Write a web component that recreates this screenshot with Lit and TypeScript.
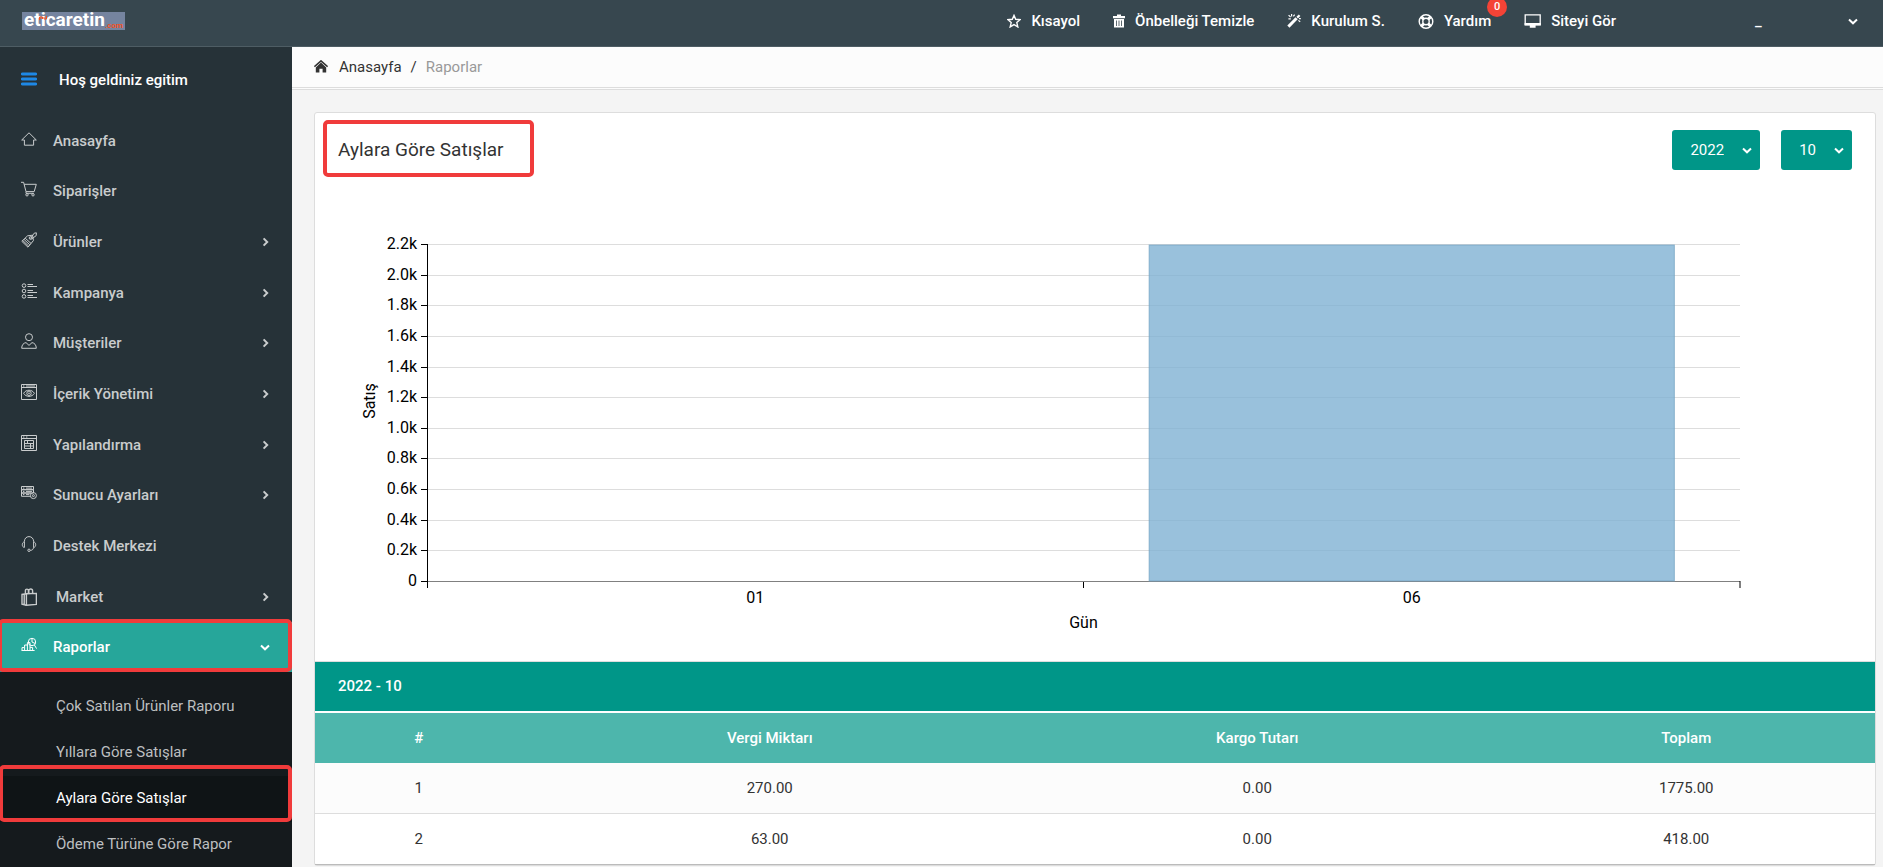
import { LitElement, html, svg, css } from "lit";
import { customElement, property, state } from "lit/decorators.js";
import { classMap } from "lit/directives/class-map.js";

const ICONS: Record<string, unknown> = {
  home: svg`<path d="M.7 9 8 1.8 15.3 9H12.6V14.2H3.4V9Z"/>`,
  cart: svg`<path d="M0 1.3H2.6L5 10.6H13.2L15.3 3.3H3.2"/><circle cx="6" cy="13.8" r="1.2"/><circle cx="12" cy="13.8" r="1.2"/><path d="M5 10.6V12.3H12.8"/>`,
  tag: svg`<path d="M.8 9.3 6.6 3.8 11.6 3.2 12.4 8.6 7 15.2ZM1.8 8.6 7.6 14M3 7.4 8.8 12.8M4.2 6.2 10 11.4"/><path d="M9.4 6.6 13.2 1.2 15.4.8 15.2 3.6 10.6 7"/><circle cx="9.6" cy="6" r="1.4"/>`,
  list: svg`<circle cx="3" cy="2.6" r="1.8"/><circle cx="3" cy="8" r="1.8"/><circle cx="3" cy="13.4" r="1.8"/><path d="M6.5 1.5H12M6.5 3.5H16M6.5 7.5H12M6.5 9.5H16M6.5 12.5H12M6.5 14.5H16"/>`,
  user: svg`<circle cx="8" cy="4.2" r="3.5"/><path d="M.7 15.3C.7 11.8 2.6 10 5 9.6L8 12.4 11 9.6C13.4 10 15.3 11.8 15.3 15.3Z"/>`,
  view: svg`<path d="M.5.5H15.5V15.5H.5ZM.5 3.5H15.5M2 2H3.4M5 2H14M2.6 9.3C5 5.2 11 5.2 13.4 9.3C11 13.4 5 13.4 2.6 9.3Z"/><circle cx="8" cy="9.3" r="2.2"/><circle cx="8" cy="9.3" r=".5"/>`,
  settings: svg`<path d="M.5.5H15.5V15.5H.5ZM.5 3.5H15.5M2 2H3.4M5 2H6.4M3.5 5.5H12.5V13.5H3.5ZM3.5 8.5H12.5M3.5 11H12.5M6.5 5.5V8.5M9.5 8.5V13.5"/>`,
  server: svg`<path d="M.5 1.5H12.5V4.7H.5ZM.5 4.7H12.5V8H.5ZM9.5 11.3H.5V8H10M2 3.1H3.4M5 3.1H11M2 6.4H3.4M5 6.4H11M2 9.6H3.4M5 9.6H8.4"/><circle cx="12.4" cy="10.6" r="3"/><circle cx="12.4" cy="10.6" r="1"/>`,
  headset: svg`<path d="M3.4 6V5.4C3.4 2.6 5.4.6 8 .6C10.6.6 12.6 2.6 12.6 5.4V6M3.4 6C.6 6 .6 11.4 3.4 11.4ZM12.6 6C15.4 6 15.4 11.4 12.6 11.4ZM12.6 11.4C12.4 13.4 11 14.4 9.4 14.4"/><circle cx="8" cy="14.3" r="1.2"/>`,
  bag: svg`<path d="M5.4 5.8 15.4 5.4V16.4L5.4 17.2ZM5.4 5.8 1 6.4V16.2L5.4 17.2M3.2 6.2V16.6M4.4 5.6V2.8C4.4.6 7.4.6 7.4 2.8V5.6M7.8 5.4V2.8C7.8.4 11.6.4 11.6 2.8V5.4" stroke-width="1.4"/>`,
  report: svg`<path d="M.6 13.5H13.6M1 13.5V10.6H3.6V13.5M3.6 10.6V8H6.4V13.5M6.4 8V5.6H9V13.5M11.6 13.5V10.4H9"/><circle cx="11" cy="5" r="3.7"/><path d="M11 5V1.2M11 5 14.4 6.6M13.4 8 15.6 11.6"/>`,
  star: svg`<path d="M7 1.4 8.7 5.3 13 5.7 9.8 8.6 10.8 12.9 7 10.6 3.2 12.9 4.2 8.6 1 5.7 5.3 5.3Z" stroke-width="1.4"/>`,
  trash: svg`<path class="solid" fill-rule="evenodd" d="M4 .4H8V2H12V4.2H0V2H4ZM1 5H11V13.6H1ZM3 6.4V12H3.8V6.4ZM5.6 6.4V12H6.4V6.4ZM8.2 6.4V12H9V6.4Z"/>`,
  wand: svg`<path d="M1.4 12.6 9.6 4.2" stroke-width="3"/><path d="M10.2 3.6 12.6 1.2" stroke-width="2.2"/><path d="M4.6 0V2.6M1.6 1.2 3.6 3.2M7.6.6 6.4 2.4M1.4 4.8H3.8M11.4 6.4 13.2 7.8M12 4.6H13.8" stroke-width="1.2"/>`,
  ring: svg`<circle cx="8" cy="7.5" r="6.8" stroke-width="1.4"/><circle cx="8" cy="7.5" r="3.2" stroke-width="1.4"/><path d="M3.4 2.9 5.8 5.3M12.6 2.9 10.2 5.3M3.4 12.1 5.8 9.7M12.6 12.1 10.2 9.7" stroke-width="3"/>`,
  monitor: svg`<path d="M1.2.8H16.2V10.6H1.2Z" stroke-width="1.3"/><path class="solid" d="M.6 9H16.8V11.6H11.6V13.8H5.8V11.6H.6Z"/>`,
  house: svg`<path class="solid" d="M7 2.6 12.2 7.4V12.6H8.6V8.8H5.4V12.6H1.8V7.4Z"/><path d="M.4 6.6 7 .9 13.6 6.6" stroke-width="1.6"/>`,
  bars: svg`<path d="M1.4 2H14.6M1.4 7H14.6M1.4 12H14.6" stroke-width="3" stroke-linecap="round"/>`,
  right: svg`<path d="M1.6 1.4 5.2 5 1.6 8.6" stroke-width="2"/>`,
  down: svg`<path d="M1 1.5 5 5.3 9 1.5" stroke-width="2"/>`,
};

const icon = (name: string, w = 16, h = 16) => html`
  <svg class="icon" width=${w} height=${h} viewBox="0 0 ${w} ${h}" aria-hidden="true">${ICONS[name]}</svg>
`;

const iconStyles = css`
  .icon {
    display: block;
    flex: none;
    fill: none;
    stroke: currentColor;
    stroke-width: 1;
  }
  .solid {
    fill: currentColor;
    stroke: none;
  }
`;

@customElement("top-bar")
class TopBar extends LitElement {
  static styles = [
    iconStyles,
    css`
      :host {
        display: flex;
        box-sizing: border-box;
        height: 47px;
        padding: 0 25px 0 22px;
        background: #37474f;
        border-bottom: 1px solid #4e5d64;
        color: #fff;
        font-weight: 500;
        line-height: 20px;
      }
      a {
        color: inherit;
        text-decoration: none;
      }
      .logo {
        display: flex;
        position: relative;
        align-items: flex-end;
        align-self: flex-start;
        height: 18px;
        margin-top: 12px;
        padding: 0 2px;
        background: #75849f;
        font: 700 19px/20px Roboto, sans-serif;
      }
      .logo small {
        color: #f4511e;
        font: 700 8px/8px Roboto, sans-serif;
      }
      .spark {
        position: absolute;
        top: 4px;
        left: 17px;
        fill: none;
        stroke: #f4511e;
      }
      nav {
        display: flex;
        gap: 33px;
        margin-left: auto;
        padding-top: 11px;
      }
      nav a {
        display: flex;
        position: relative;
        gap: 10px;
        height: 20px;
        align-items: center;
      }
      .badge {
        position: absolute;
        top: -14px;
        right: -16px;
        width: 20px;
        height: 20px;
        border-radius: 10px;
        background: #f44336;
        font-size: 11px;
        text-align: center;
      }
      .account {
        display: flex;
        align-items: center;
        justify-content: space-between;
        width: 103px;
        height: 20px;
        margin: 11px 0 0 139px;
        padding: 0;
        border: 0;
        background: none;
        color: inherit;
        font: inherit;
      }
    `,
  ];

  render() {
    return html`
      <a class="logo" href="#">eticaretin<small>.com</small><svg class="spark" width="8" height="4" aria-hidden="true"><path d="M.5 4V1H3.5V3M2 1V3M5 1V3H7.5V0" /></svg></a>
      <nav>
        <a href="#">${icon("star", 14, 14)}Kısayol</a>
        <a href="#">${icon("trash", 12, 14)}Önbelleği Temizle</a>
        <a href="#">${icon("wand", 14, 14)}Kurulum S.</a>
        <a href="#">${icon("ring", 16, 15)}Yardım<span class="badge">0</span></a>
        <a href="#">${icon("monitor", 17, 14)}Siteyi Gör</a>
      </nav>
      <button class="account" aria-label="Hesap"><span>_</span>${icon("down", 10, 7)}</button>
    `;
  }
}

interface MenuItem {
  label: string;
  icon: string;
  sub?: boolean;
}

@customElement("side-menu")
class SideMenu extends LitElement {
  static styles = [
    iconStyles,
    css`
      :host {
        display: block;
        overflow-y: auto;
        scrollbar-width: none;
        background: #263238;
        color: #c9cccd;
        line-height: 20px;
      }
      a {
        color: inherit;
        text-decoration: none;
      }
      ul {
        margin: 0;
        padding: 0;
        list-style: none;
      }
      .welcome {
        display: flex;
        gap: 22px;
        align-items: center;
        padding: 23px 21px 25px;
        color: #fff;
        font-weight: 500;
      }
      .welcome .icon {
        margin-bottom: 2px;
        color: #1e88e5;
      }
      .item {
        display: flex;
        position: relative;
        box-sizing: border-box;
        gap: 16px;
        align-items: center;
        height: 51px;
        padding: 0 22px 0 21px;
        font-weight: 500;
      }
      li:nth-child(3n + 2) > .item {
        height: 50px;
      }
      .item > .icon:first-child {
        margin-bottom: 4px;
      }
      .item.wide {
        gap: 19px;
      }
      .item.wide > .icon:first-child {
        margin-bottom: 0;
      }
      .arrow {
        display: flex;
        justify-content: center;
        width: 10px;
        margin-left: auto;
      }
      .open {
        background: #26a69a;
        color: #fff;
      }
      .submenu {
        padding-top: 12px;
        background: #151a1d;
      }
      .submenu a {
        display: block;
        position: relative;
        padding: 12px 24px 14px 56px;
        color: #bdbfc0;
      }
      .submenu .active {
        background: #0f1416;
        color: #fff;
      }
      .marked::after {
        content: "";
        position: absolute;
        inset: -3px 0 0 -2px;
        border: 4px solid #f03b3b;
        border-radius: 5px;
      }
      .submenu .marked::after {
        inset: -11px 0 0 -1px;
      }
    `,
  ];

  private items: MenuItem[] = [
    { label: "Anasayfa", icon: "home" },
    { label: "Siparişler", icon: "cart" },
    { label: "Ürünler", icon: "tag", sub: true },
    { label: "Kampanya", icon: "list", sub: true },
    { label: "Müşteriler", icon: "user", sub: true },
    { label: "İçerik Yönetimi", icon: "view", sub: true },
    { label: "Yapılandırma", icon: "settings", sub: true },
    { label: "Sunucu Ayarları", icon: "server", sub: true },
    { label: "Destek Merkezi", icon: "headset" },
    { label: "Market", icon: "bag", sub: true },
  ];

  private reports = [
    "Çok Satılan Ürünler Raporu",
    "Yıllara Göre Satışlar",
    "Aylara Göre Satışlar",
    "Ödeme Türüne Göre Rapor",
  ];

  render() {
    return html`
      <div class="welcome">${icon("bars", 16, 14)}<span>Hoş geldiniz egitim</span></div>
      <ul>
        ${this.items.map(
          (item) => html`
            <li>
              <a class=${classMap({ item: true, wide: item.icon === "bag" })} href="#">
                ${icon(item.icon, 16, item.icon === "bag" ? 18 : 16)}
                <span>${item.label}</span>
                ${item.sub ? html`<span class="arrow">${icon("right", 7, 10)}</span>` : ""}
              </a>
            </li>
          `
        )}
        <li>
          <a class="item open marked" href="#">
            ${icon("report")}
            <span>Raporlar</span>
            <span class="arrow">${icon("down", 10, 7)}</span>
          </a>
          <ul class="submenu">
            ${this.reports.map(
              (label, i) => html`
                <li><a class=${classMap({ active: i === 2, marked: i === 2 })} href="#">${label}</a></li>
              `
            )}
          </ul>
        </li>
      </ul>
    `;
  }
}

@customElement("sales-chart")
class SalesChart extends LitElement {
  static styles = css`
    :host {
      display: block;
      padding: 74px 135px 80px 112px;
    }
    svg {
      display: block;
      width: 100%;
      overflow: visible;
      font-size: 16px;
      fill: #000;
    }
    .grid {
      stroke: #ddd;
    }
    .axis {
      stroke: #000;
    }
    .base {
      stroke: #808080;
    }
    .bar {
      fill: #80b1d3;
      fill-opacity: 0.8;
      stroke: #6f9fc0;
      stroke-opacity: 0.7;
    }
    .y {
      text-anchor: end;
    }
    .x {
      text-anchor: middle;
    }
  `;

  private height = 337;
  private ticks = ["2.2k", "2.0k", "1.8k", "1.6k", "1.4k", "1.2k", "1.0k", "0.8k", "0.6k", "0.4k", "0.2k", "0"];

  render() {
    const h = this.height;
    const at = (i: number) => Math.round((i * h) / (this.ticks.length - 1)) + 0.5;
    return html`
      <svg height=${h} role="img" aria-label="Aylara göre satış grafiği">
        ${this.ticks.map(
          (label, i) => svg`
            <line class=${i === this.ticks.length - 1 ? "base" : "grid"} x1="0" x2="100%" y1=${at(i)} y2=${at(i)} />
            <line class="axis" x1="-6" x2="0" y1=${at(i)} y2=${at(i)} />
            <text class="y" x="-10" y=${at(i) + 4}>${label}</text>
          `
        )}
        <rect class="bar" x="55%" y="1" width="40%" height=${h - 1} />
        <line class="axis" x1="0.5" x2="0.5" y1="0" y2=${h + 7} />
        <line class="axis" x1="50%" x2="50%" y1=${h + 1} y2=${h + 7} />
        <line class="axis" x1="100%" x2="100%" y1=${h} y2=${h + 7} />
        <text class="x" x="25%" y=${h + 22}>01</text>
        <text class="x" x="75%" y=${h + 22}>06</text>
        <text class="x" x="50%" y=${h + 47}>Gün</text>
        <text class="x" transform="translate(-52 157) rotate(-90)">Satış</text>
      </svg>
    `;
  }
}

@customElement("pick-list")
class PickList extends LitElement {
  static styles = [
    iconStyles,
    css`
      :host {
        display: block;
        position: relative;
        color: #fff;
      }
      select {
        display: block;
        height: 40px;
        padding: 0 36px 0 18px;
        border: 0;
        border-radius: 3px;
        appearance: none;
        background: #009688;
        color: inherit;
        font: inherit;
        field-sizing: content;
      }
      .icon {
        position: absolute;
        top: 17px;
        right: 8px;
        pointer-events: none;
      }
    `,
  ];

  @property() label = "";
  @property() value = "";
  @property({ attribute: false }) options: string[] = [];

  render() {
    return html`
      <select aria-label=${this.label}>
        ${this.options.map((o) => html`<option ?selected=${o === this.value}>${o}</option>`)}
      </select>
      ${icon("down", 10, 7)}
    `;
  }
}

@customElement("app-root")
class AppRoot extends LitElement {
  static styles = [
    iconStyles,
    css`
      :host {
        display: grid;
        grid-template: auto 1fr / 292px 1fr;
        height: 100vh;
        overflow: hidden;
        background: #f4f4f4;
        color: #333;
        font: 15px/20px Roboto, sans-serif;
      }
      top-bar {
        grid-column: 1 / -1;
      }
      main {
        min-width: 0;
        overflow-y: auto;
        scrollbar-width: none;
      }
      .crumbs {
        display: flex;
        align-items: center;
        padding: 10px 22px;
        border-bottom: 3px double #ddd;
        background: #fcfcfc;
      }
      .crumbs a {
        display: flex;
        gap: 11px;
        align-items: center;
        color: #333;
        text-decoration: none;
      }
      .slash {
        padding: 0 9px;
      }
      .current {
        color: #999;
      }
      .card {
        margin: 22px 7px 0 22px;
        border: 1px solid #ddd;
        border-radius: 3px;
        background: #fff;
      }
      .head {
        display: flex;
        gap: 21px;
        align-items: center;
        padding: 17px 23px 0;
      }
      h1 {
        position: relative;
        margin: 0 auto 0 0;
        font-size: 19px;
        font-weight: 400;
        line-height: 24px;
      }
      h1::after {
        content: "";
        position: absolute;
        inset: -18px -30px -15px -15px;
        border: 4px solid #f03b3b;
        border-radius: 5px;
      }
      table {
        width: 100%;
        border-collapse: collapse;
        border-top: 1px solid #ddd;
        table-layout: fixed;
        text-align: center;
      }
      th {
        padding: 15px 23px;
        background: #4db6ac;
        color: #fff;
        font-weight: 500;
      }
      th.period {
        padding: 14px 23px 15px;
        border-bottom: 2px solid #fff;
        background: #009688;
        text-align: left;
      }
      td {
        padding: 15px 23px;
        border-bottom: 1px solid #ddd;
      }
      .odd {
        background: #fcfcfc;
      }
      tbody tr:last-child td {
        border-bottom-color: #bbb;
      }
      .no {
        width: 13.3%;
      }
      .tax {
        width: 31.7%;
      }
      .cargo {
        width: 30.8%;
      }
    `,
  ];

  @state() private year = "2022";
  @state() private month = "10";

  private rows = [
    ["1", "270.00", "0.00", "1775.00"],
    ["2", "63.00", "0.00", "418.00"],
  ];

  render() {
    return html`
      <top-bar></top-bar>
      <side-menu></side-menu>
      <main>
        <div class="crumbs">
          <a href="#">${icon("house", 14, 14)}Anasayfa</a>
          <span class="slash">/</span>
          <span class="current">Raporlar</span>
        </div>
        <section class="card">
          <div class="head">
            <h1>Aylara Göre Satışlar</h1>
            <pick-list label="Yıl" .value=${this.year} .options=${["2022"]}></pick-list>
            <pick-list label="Ay" .value=${this.month} .options=${["10"]}></pick-list>
          </div>
          <sales-chart></sales-chart>
          <table>
            <colgroup>
              <col class="no" />
              <col class="tax" />
              <col class="cargo" />
              <col />
            </colgroup>
            <thead>
              <tr><th class="period" colspan="4">${this.year} - ${this.month}</th></tr>
              <tr><th>#</th><th>Vergi Miktarı</th><th>Kargo Tutarı</th><th>Toplam</th></tr>
            </thead>
            <tbody>
              ${this.rows.map(
                (row, i) => html`
                  <tr class=${classMap({ odd: i % 2 === 0 })}>${row.map((cell) => html`<td>${cell}</td>`)}</tr>
                `
              )}
            </tbody>
          </table>
        </section>
      </main>
    `;
  }
}
